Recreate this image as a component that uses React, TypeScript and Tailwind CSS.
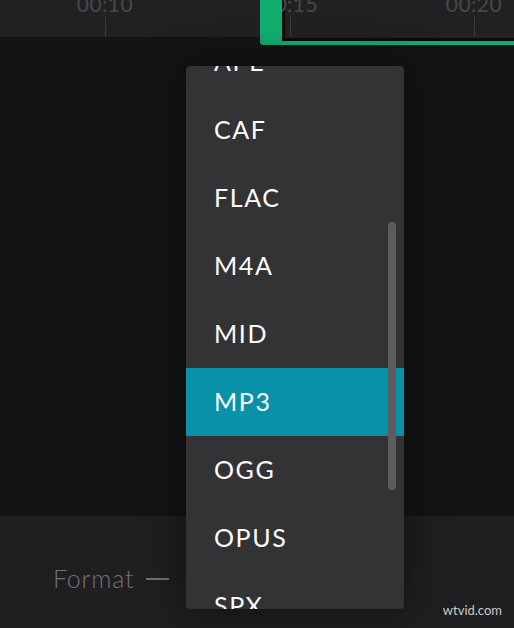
const formats = ["APE", "CAF", "FLAC", "M4A", "MID", "MP3", "OGG", "OPUS", "SPX"];

const ticks = [
  { label: "00:10", x: 105 },
  { label: "00:15", x: 290 },
  { label: "00:20", x: 474 },
];

export default function App() {
  return (
    <div
      className="relative flex h-[628px] w-[514px] flex-col overflow-hidden bg-[#141416]"
      style={{ fontFamily: "Lato, 'Noto Sans', sans-serif" }}
    >
      {/* Timeline ruler */}
      <div className="relative h-[37px] shrink-0 bg-[#212123]">
        {/* selected clip */}
        <div className="absolute left-[260px] right-0 top-0 z-10 h-[45px] rounded-bl-[4px] bg-[#0fae6e]">
          <div className="absolute bottom-[4px] left-[22px] right-0 top-0 border-b-[3px] border-l-[3px] border-[#0c0c0d] bg-[#212123]" />
        </div>
        {ticks.map((t) => (
          <div key={t.label} className="absolute top-0 z-20" style={{ left: t.x }}>
            <span className="absolute -top-[7px] left-0 -translate-x-1/2 text-[21px] leading-none tracking-[0.5px] text-[#48484b]">
              {t.label}
            </span>
            <span className="absolute left-0 top-[17px] h-[20px] w-px bg-[#3c3c3f]" />
          </div>
        ))}
        <div className="absolute left-[260px] top-0 z-30 h-[45px] w-[22px] rounded-bl-[4px] bg-[#0fae6e]" />
      </div>

      <div className="flex-1" />

      {/* Bottom settings panel */}
      <div className="flex h-[112px] shrink-0 items-center gap-[12px] bg-[#1f1f21] pl-[53px] pt-[14px]">
        <span className="text-[25px] font-light tracking-[0.8px] text-[#727275]">Format</span>
        <span className="h-[2px] w-[23px] bg-[#727275]" />
      </div>

      {/* Format dropdown */}
      <div className="absolute left-[186px] top-[66px] z-40 h-[543px] w-[218px] overflow-hidden rounded-[4px] bg-[#333335] shadow-[0_0_40px_rgba(0,0,0,0.5)]">
        <div className="-mt-[38px]">
          {formats.map((f) => (
            <div
              key={f}
              className={
                "flex h-[68px] items-center px-[28px] text-[25px] tracking-[1.6px] text-white " +
                (f === "MP3" ? "bg-[#0891a8]" : "")
              }
            >
              {f}
            </div>
          ))}
        </div>
        <div className="absolute left-[202px] top-[156px] h-[268px] w-[8px] rounded-full bg-[#5c5c5f]" />
      </div>

      <span className="absolute bottom-[8px] right-[12px] z-50 text-[13px] text-[#c8c8c8]">wtvid.com</span>
    </div>
  );
}
